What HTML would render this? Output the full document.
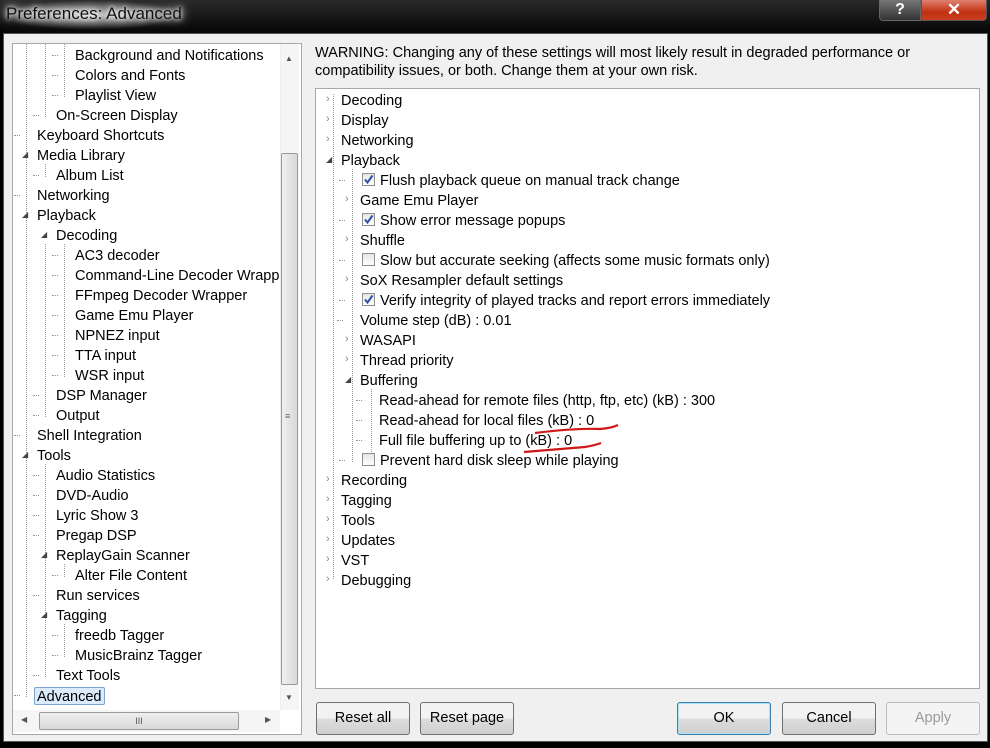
<!DOCTYPE html>
<html><head><meta charset="utf-8"><style>
*{margin:0;padding:0;box-sizing:border-box}
body{width:990px;height:748px;overflow:hidden;background:#000;font-family:"Liberation Sans",sans-serif;font-size:14.5px;color:#000;position:relative}
.title{position:absolute;left:0;top:0;width:990px;height:33px;background:linear-gradient(#2a2a2a,#050505)}
.title span{position:absolute;left:6px;top:4px;font-size:17px;color:#111;text-shadow:0 0 8px #fff,0 0 12px #fff,0 0 4px #fff}
.glow{position:absolute;left:0;top:0;width:180px;height:30px;background:radial-gradient(ellipse at 50% 50%,rgba(255,255,255,.75),rgba(255,255,255,0) 70%)}
.win{position:absolute;left:3px;top:33px;width:985px;height:709px;background:#f0f0f0;border:1px solid #555}
.box{position:absolute;background:#fff;border:1px solid #a8a8a8;overflow:hidden}
.t{position:absolute;white-space:nowrap;line-height:18px;height:18px}
.sel{background:#dcebfc;border:1px solid #7da2ce;border-radius:2px;padding:0 2px;margin-left:-3px}
.ex{position:absolute;font-size:8px;color:#444;line-height:10px}
.cl{position:absolute;font-size:11px;color:#888;line-height:12px}
.cb{position:absolute;width:13px;height:13px;border:1px solid #8f8f8f;background:linear-gradient(#e6e6e6,#fff)}
.cb svg{position:absolute;left:0;top:0}
.vd{position:absolute;border-left:1px dotted #999}
.hd{position:absolute;border-top:1px dotted #999;width:6px}
.btn{position:absolute;top:702px;height:33px;border:1px solid #707070;border-radius:3px;background:linear-gradient(#f2f2f2 50%,#dddddd 50%,#cfcfcf);text-align:center;line-height:31px;font-size:14.5px}
</style></head><body>
<div class="title"><div class="glow"></div><span>Preferences: Advanced</span>
<div style="position:absolute;left:879px;top:0;width:42px;height:21px;border:1px solid #666;border-top:none;border-radius:0 0 0 4px;background:linear-gradient(#777,#333);color:#fff;font-weight:bold;font-size:16px;text-align:center;line-height:19px">?</div>
<div style="position:absolute;left:921px;top:0;width:66px;height:21px;border:1px solid #555;border-top:none;border-radius:0 0 4px 0;background:linear-gradient(#e08070,#c03010 60%,#c84020);color:#fff;font-weight:bold;font-size:17px;text-align:center;line-height:19px">✕</div>
</div>
<div class="win"></div>

<div class="box" style="left:12px;top:43px;width:290px;height:692px">
 <div class="vd" style="left:13px;top:0;height:653px"></div>
 <div class="vd" style="left:32px;top:0;height:73px"></div>
 <div class="vd" style="left:51px;top:0;height:53px"></div>
 <div class="vd" style="left:32px;top:120px;height:13px"></div>
 <div class="vd" style="left:32px;top:200px;height:173px"></div>
 <div class="vd" style="left:51px;top:200px;height:133px"></div>
 <div class="vd" style="left:32px;top:420px;height:213px"></div>
 <div class="vd" style="left:51px;top:520px;height:13px"></div>
 <div class="vd" style="left:51px;top:580px;height:33px"></div>
 <div id="lt"></div>
 <div style="position:absolute;left:267px;top:0;width:19px;height:666px;background:#f5f5f5;border-left:1px solid #eee"></div>
 <div style="position:absolute;left:272px;top:10px;font-size:8px;color:#555">▲</div>
 <div style="position:absolute;left:268px;top:109px;width:17px;height:532px;border:1px solid #9a9a9a;border-radius:2px;background:linear-gradient(90deg,#f0f0f0,#d8d8d8)"></div>
 <div style="position:absolute;left:272px;top:367px;font-size:9px;color:#666">≡</div>
 <div style="position:absolute;left:272px;top:649px;font-size:8px;color:#555">▼</div>
 <div style="position:absolute;left:0;top:666px;width:267px;height:22px;background:#f5f5f5"></div>
 <div style="position:absolute;left:8px;top:671px;font-size:8px;color:#555">◀</div>
 <div style="position:absolute;left:26px;top:668px;width:200px;height:18px;border:1px solid #9a9a9a;border-radius:2px;background:linear-gradient(#f0f0f0,#d8d8d8);text-align:center;font-size:9px;line-height:16px;color:#555">III</div>
 <div style="position:absolute;left:252px;top:671px;font-size:8px;color:#555">▶</div>
</div>

<div class="t" style="left:315px;top:44px;width:625px;line-height:18px;height:40px;white-space:normal">WARNING: Changing any of these settings will most likely result in degraded performance or compatibility issues, or both. Change them at your own risk.</div>

<div class="box" style="left:315px;top:88px;width:665px;height:601px">
 <div class="vd" style="left:17px;top:5px;height:485px"></div>
 <div class="vd" style="left:36px;top:80px;height:293px"></div>
 <div class="vd" style="left:55px;top:300px;height:73px"></div>
 <div id="rt"></div>
</div>

<svg style="position:absolute;left:0;top:0" width="990" height="748">
<path d="M535 433 Q575 428 600 429 Q612 428 618 425" stroke="#d01818" stroke-width="2.2" fill="none"/>
<path d="M524 452 Q560 449 585 447 Q596 445 601 443" stroke="#d01818" stroke-width="2.2" fill="none"/>
</svg>

<div class="btn" style="left:316px;width:94px">Reset all</div>
<div class="btn" style="left:420px;width:94px">Reset page</div>
<div class="btn" style="left:677px;width:94px;border-color:#3c7fb1;box-shadow:inset 0 0 0 1px #aee0f8">OK</div>
<div class="btn" style="left:782px;width:94px">Cancel</div>
<div class="btn" style="left:886px;width:94px;border-color:#bcbcbc;background:#f4f4f4;color:#9a9a9a">Apply</div>

<script>
function add(id,ox,oy,items){var c=document.getElementById(id),h='';
items.forEach(function(it,i){var x=it[1]-ox,y=it[2]-oy-8,cy=it[2]-oy;
 if(it[3]=='e')h+='<div class="ex" style="left:'+(x-15)+'px;top:'+(cy-5)+'px">◢</div>';
 else if(it[3]=='c')h+='<div class="cl" style="left:'+(x-15)+'px;top:'+(cy-7)+'px">›</div>';
 else h+='<div class="hd" style="left:'+(x-23)+'px;top:'+cy+'px"></div>';
 var tx=x;
 if(it[4]!==undefined){h+='<div class="cb" style="left:'+x+'px;top:'+(cy-7)+'px">'+(it[4]?'<svg width="11" height="11"><path d="M2 5.5 L4.5 8.5 L9.5 1.5" stroke="#2a50a8" stroke-width="2" fill="none"/></svg>':'')+'</div>';tx=x+18;}
 h+='<div class="t'+(it[5]?' sel':'')+'" style="left:'+tx+'px;top:'+y+'px">'+it[0]+'</div>';});
c.innerHTML=h;}
add('lt',13,44,[
['Background and Notifications',75,55],['Colors and Fonts',75,75],['Playlist View',75,95],['On-Screen Display',56,115],
['Keyboard Shortcuts',37,135],['Media Library',37,155,'e'],['Album List',56,175],['Networking',37,195],['Playback',37,215,'e'],
['Decoding',56,235,'e'],['AC3 decoder',75,255],['Command-Line Decoder Wrapper',75,275],['FFmpeg Decoder Wrapper',75,295],
['Game Emu Player',75,315],['NPNEZ input',75,335],['TTA input',75,355],['WSR input',75,375],['DSP Manager',56,395],['Output',56,415],
['Shell Integration',37,435],['Tools',37,455,'e'],['Audio Statistics',56,475],['DVD-Audio',56,495],['Lyric Show 3',56,515],
['Pregap DSP',56,535],['ReplayGain Scanner',56,555,'e'],['Alter File Content',75,575],['Run services',56,595],['Tagging',56,615,'e'],
['freedb Tagger',75,635],['MusicBrainz Tagger',75,655],['Text Tools',56,675],['Advanced',37,695,null,undefined,1]]);
add('rt',316,89,[
['Decoding',341,100,'c'],['Display',341,120,'c'],['Networking',341,140,'c'],['Playback',341,160,'e'],
['Flush playback queue on manual track change',362,180,null,1],['Game Emu Player',360,200,'c'],
['Show error message popups',362,220,null,1],['Shuffle',360,240,'c'],
['Slow but accurate seeking (affects some music formats only)',362,260,null,0],['SoX Resampler default settings',360,280,'c'],
['Verify integrity of played tracks and report errors immediately',362,300,null,1],['Volume step (dB) : 0.01',360,320],
['WASAPI',360,340,'c'],['Thread priority',360,360,'c'],['Buffering',360,380,'e'],
['Read-ahead for remote files (http, ftp, etc) (kB) : 300',379,400],['Read-ahead for local files (kB) : 0',379,420],
['Full file buffering up to (kB) : 0',379,440],['Prevent hard disk sleep while playing',362,460,null,0],
['Recording',341,480,'c'],['Tagging',341,500,'c'],['Tools',341,520,'c'],['Updates',341,540,'c'],['VST',341,560,'c'],['Debugging',341,580,'c']]);
</script>
</body></html>
